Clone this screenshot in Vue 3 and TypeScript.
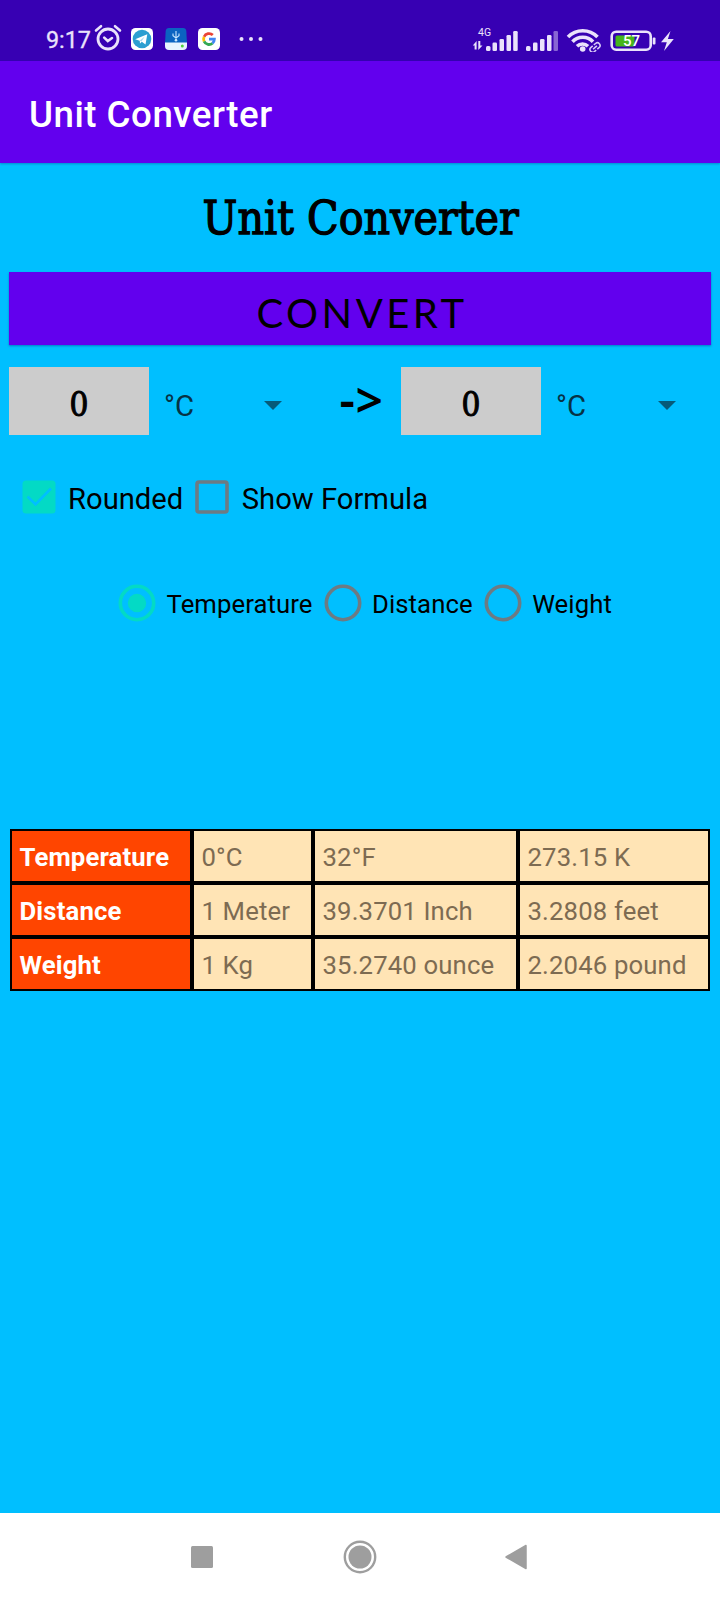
<script setup lang="ts">
import { ref } from 'vue'

interface TableRow {
  name: string
  values: string[]
}

const fromValue = ref('0')
const toValue = ref('0')
const unit = '°C'
const rounded = ref(true)
const showFormula = ref(false)
const kinds = ['Temperature', 'Distance', 'Weight']
const selectedKind = ref('Temperature')

const rows: TableRow[] = [
  { name: 'Temperature', values: ['0°C', '32°F', '273.15 K'] },
  { name: 'Distance', values: ['1 Meter', '39.3701 Inch', '3.2808 feet'] },
  { name: 'Weight', values: ['1 Kg', '35.2740 ounce', '2.2046 pound'] },
]
</script>

<template>
  <div class="screen">
    <header class="status">
      <span class="clock">9:17</span>
      <svg class="alarm" width="28" height="28" viewBox="0 0 28 28" fill="none" stroke="#eae2fb" stroke-linecap="round">
        <circle cx="14" cy="15" r="10" stroke-width="2.8" />
        <path d="M2 6.5 7 2.2M26 6.5 21 2.2" stroke-width="2.6" />
        <path d="m10.2 13.6 3.6 3.4 4.2-3" stroke-width="2.6" />
      </svg>
      <svg class="telegram" width="22" height="22" viewBox="0 0 22 22">
        <rect width="22" height="22" rx="4.5" fill="#fff" />
        <circle cx="11" cy="11" r="9.3" fill="#2c9fd1" />
        <path d="M4.2 11.2 16.3 6.2 14.5 16.4 10.8 13.8 9 15.5 8.7 12.8Z" fill="#fff" />
        <path d="m8.7 12.8 5-4.2-3.2 4.8" fill="#a9d8ee" />
      </svg>
      <svg class="usb" width="22" height="22" viewBox="0 0 22 22">
        <path d="M4 0h14q3 0 3.3 3L22 15H0L.7 3Q1 0 4 0Z" fill="#0b63c1" />
        <path d="M0 14.5h22V18q0 4-4 4H4q-4 0-4-4Z" fill="#e8f4ff" />
        <path d="M11 3v10M8 5.5v2.3L11 10l3-2.2V5.5" fill="none" stroke="#c9e6ff" stroke-width="1.1" />
        <circle cx="11" cy="12.3" r="1.3" fill="#c9e6ff" />
        <circle cx="17.3" cy="18" r="1.5" fill="#50d33c" />
      </svg>
      <svg class="google" width="22" height="22" viewBox="0 0 22 22">
        <rect width="22" height="22" rx="4.5" fill="#fff" />
        <g fill="none" stroke-width="2.8">
          <path d="M14.8 7.1A5.4 5.4 0 0 0 6.1 8.8" stroke="#ea4335" />
          <path d="M6.1 8.8a5.4 5.4 0 0 0 0 4.6" stroke="#fbbc05" />
          <path d="M6.1 13.4a5.4 5.4 0 0 0 8.4 1.8" stroke="#34a853" />
          <path d="M14.5 15.2a5.4 5.4 0 0 0 1.9-4.1H11" stroke="#4285f4" />
        </g>
      </svg>
      <svg class="more" width="24" height="6" viewBox="0 0 24 6" fill="#eae2fb">
        <circle cx="2.5" cy="3" r="2" /><circle cx="12" cy="3" r="2" /><circle cx="21.5" cy="3" r="2" />
      </svg>
      <svg class="signals" width="220" height="30" viewBox="0 0 220 30" fill="#eae2fb">
        <text x="8" y="14" class="network">4G</text>
        <path d="M2.8 23.5 6.6 19v8.5H4.6v-4ZM8.3 19h2v4.500h2.200L8.3 28Z" />
        <rect x="16" y="24" width="4.5" height="5" rx="1.5" />
        <rect x="22.5" y="20.5" width="4.5" height="8.5" rx="1.3" />
        <rect x="29.5" y="17" width="4.5" height="12" rx="1.3" />
        <rect x="36.5" y="13" width="4.5" height="16" rx="1.3" />
        <rect x="43.2" y="9" width="4.5" height="20" rx="1.3" />
        <rect x="56" y="24" width="4.5" height="5" rx="1.5" />
        <rect x="63" y="20.5" width="4.5" height="8.5" rx="1.3" />
        <rect x="70" y="17" width="4.5" height="12" rx="1.3" />
        <rect x="77" y="13" width="4.5" height="16" rx="1.3" />
        <rect x="83.5" y="9" width="4.5" height="20" rx="1.3" opacity=".45" />
        <g fill="none" stroke="#eae2fb" stroke-width="3.6">
          <path d="M98 15a20.5 20.5 0 0 1 29.5 0" />
          <path d="M102.5 19.7a14 14 0 0 1 20.5 0" />
          <path d="M107 24.2a8 8 0 0 1 11 0" />
        </g>
        <circle cx="112.7" cy="27" r="2.8" />
        <g transform="rotate(-40 125 25.5)" fill="none" stroke="#3700b3" stroke-width="4">
          <rect x="119.5" y="22.8" width="11" height="5.4" rx="2.7" />
        </g>
        <g transform="rotate(-40 125 25.5)" fill="none" stroke="#d6c8f6" stroke-width="1.6">
          <path d="M124.3 22.8h-2.300a2.700 2.700 0 0 0 0 5.400h2.300M125.700 22.800h2.300a2.700 2.700 0 0 1 0 5.400h-2.300M122.500 25.500h5" />
        </g>
        <rect x="141.7" y="9.7" width="39" height="18" rx="4.5" fill="none" stroke="#eae2fb" stroke-width="2.6" />
        <rect x="145.5" y="13.5" width="19" height="11" rx="1.5" fill="#46b51c" />
        <rect x="182.7" y="15.5" width="2.8" height="7" rx="1" />
        <text x="153" y="24.2" class="charge">57</text>
        <path d="M200.5 9 191 20.3h5.8L194 29l9.8-12h-5.9Z" />
      </svg>
    </header>

    <div class="app-bar">Unit Converter</div>

    <main class="content">
      <h1 class="heading"><span>Unit Converter</span></h1>
      <button class="convert" type="button"><span class="convert-label">CONVERT</span></button>

      <section class="fields">
        <div class="value">{{ fromValue }}</div>
        <div class="unit">
          <span>{{ unit }}</span>
          <svg width="18" height="9" viewBox="0 0 18 9"><path d="M0 0h18L9 9Z" fill="#065b78" /></svg>
        </div>
        <div class="arrow"><span>-&gt;</span></div>
        <div class="value">{{ toValue }}</div>
        <div class="unit last">
          <span>{{ unit }}</span>
          <svg width="18" height="9" viewBox="0 0 18 9"><path d="M0 0h18L9 9Z" fill="#065b78" /></svg>
        </div>
      </section>

      <section class="checks">
        <label class="check" @click="rounded = !rounded">
          <svg width="34" height="34" viewBox="0 0 34 34">
            <rect v-if="rounded" x=".5" y=".5" width="33" height="33" rx="3.5" fill="#03dac5" />
            <rect v-else x="2" y="2" width="30" height="30" rx="2" fill="none" stroke="#6d7b83" stroke-width="3.6" />
            <path v-if="rounded" d="m5.5 16.5 8 8L29 8.5" fill="none" stroke="#00bfff" stroke-width="2.6" />
          </svg>
          <span>Rounded</span>
        </label>
        <label class="check" @click="showFormula = !showFormula">
          <svg width="34" height="34" viewBox="0 0 34 34">
            <rect v-if="showFormula" x=".5" y=".5" width="33" height="33" rx="3.5" fill="#03dac5" />
            <rect v-else x="2" y="2" width="30" height="30" rx="2" fill="none" stroke="#6d7b83" stroke-width="3.6" />
            <path v-if="showFormula" d="m5.5 16.5 8 8L29 8.5" fill="none" stroke="#00bfff" stroke-width="2.6" />
          </svg>
          <span>Show Formula</span>
        </label>
      </section>

      <section class="radios">
        <label v-for="kind in kinds" :key="kind" class="radio" @click="selectedKind = kind">
          <svg width="38" height="38" viewBox="0 0 38 38" :class="{ on: selectedKind === kind }">
            <circle class="ring" cx="19" cy="19" r="16.7" />
            <circle v-if="selectedKind === kind" class="dot" cx="19" cy="19" r="9.2" />
          </svg>
          <span>{{ kind }}</span>
        </label>
      </section>

      <section class="table">
        <template v-for="row in rows" :key="row.name">
          <div class="cell name">{{ row.name }}</div>
          <div v-for="value in row.values" :key="value" class="cell">{{ value }}</div>
        </template>
      </section>
    </main>

    <nav class="nav">
      <svg width="22" height="22" viewBox="0 0 22 22"><rect width="22" height="22" rx="1.5" fill="#9e9e9e" /></svg>
      <svg class="home" width="34" height="34" viewBox="0 0 34 34">
        <circle cx="17" cy="17" r="15.2" fill="none" stroke="#9e9e9e" stroke-width="2.4" />
        <circle cx="17" cy="17" r="11.5" fill="#9e9e9e" />
      </svg>
      <svg width="22" height="26" viewBox="0 0 22 26">
        <path d="M1 13 21 1.5v23Z" fill="#9e9e9e" stroke="#9e9e9e" stroke-width="1.5" stroke-linejoin="round" />
      </svg>
    </nav>
  </div>
</template>

<style>
body {
  margin: 0;
}
</style>

<style scoped>
.screen {
  width: 720px;
  height: 1600px;
  display: flex;
  flex-direction: column;
  overflow: hidden;
  background: #00bfff;
  color: #000;
  font-family: Roboto, "Liberation Sans", sans-serif;
}
.screen svg {
  flex: none;
  display: block;
}
.status {
  box-sizing: border-box;
  height: 61px;
  flex: none;
  display: flex;
  align-items: center;
  padding: 17px 0 0 46px;
  background: #3700b3;
  color: #eae2fb;
}
.clock {
  width: 48px;
  padding-top: 2px;
  font-size: 23.3px;
  line-height: 24px;
  -webkit-text-stroke: 0.3px #eae2fb;
}
.alarm {
  margin: 0 0 2px;
}
.telegram {
  margin-left: 9px;
}
.usb {
  margin-left: 12px;
}
.google {
  margin-left: 11px;
}
.more {
  margin-left: 19px;
}
.signals {
  margin: 0 0 5px 207px;
}
.network {
  font-size: 10.5px;
}
.charge {
  font-size: 15px;
  font-weight: 500;
  fill: #fff;
}
.app-bar {
  box-sizing: border-box;
  height: 102px;
  flex: none;
  display: flex;
  align-items: center;
  padding: 4px 0 0 29px;
  background: #6200ee;
  box-shadow: 0 1px 2px rgba(0, 60, 130, 0.4);
  color: #fff;
  font-size: 36.7px;
  font-weight: 500;
  letter-spacing: 0.5px;
}
.content {
  flex: 1;
  padding: 0 9px;
}
.heading {
  height: 109px;
  margin: 0;
  display: flex;
  align-items: center;
  justify-content: center;
  padding-left: 1px;
  white-space: nowrap;
  font-family: "DejaVu Serif", serif;
  font-size: 47px;
  font-weight: 400;
  -webkit-text-stroke: 1.4px #000;
}
.heading span {
  transform: scaleX(0.88);
}
.convert {
  width: 702px;
  height: 73px;
  display: flex;
  justify-content: center;
  padding: 19px 0 0;
  border: 0;
  background: #6200ee;
  box-shadow: 0 1px 2px rgba(0, 50, 140, 0.5);
  color: #000;
  font-family: Lato, sans-serif;
  font-size: 40px;
}
.convert-label {
  padding-left: 4px;
  line-height: 44px;
  letter-spacing: 3.5px;
}
.fields {
  height: 68px;
  margin-top: 22px;
  display: flex;
}
.value {
  width: 140px;
  display: flex;
  align-items: center;
  justify-content: center;
  padding-top: 7px;
  box-sizing: border-box;
  background: #ccc;
  font-family: "DejaVu Serif Condensed", "DejaVu Serif", serif;
  font-size: 33px;
  -webkit-text-stroke: 1px #000;
}
.unit {
  box-sizing: border-box;
  width: 162px;
  display: flex;
  align-items: center;
  justify-content: space-between;
  padding: 10px 29px 0 15px;
  color: #073244;
  font-size: 29.3px;
}
.unit svg {
  margin-bottom: 2px;
}
.last {
  padding-right: 27px;
}
.arrow {
  width: 90px;
  padding-left: 11px;
  box-sizing: border-box;
  font-family: "Noto Sans", sans-serif;
  font-size: 48px;
  font-weight: 600;
  line-height: 66px;
  letter-spacing: 0.5px;
  text-align: center;
  white-space: nowrap;
}
.checks {
  display: flex;
  gap: 12px;
  height: 34px;
  margin: 45px 0 0 12.5px;
}
.check {
  display: flex;
  align-items: center;
  gap: 12.5px;
  font-size: 29.2px;
}
.check span {
  padding-top: 3px;
}
.radios {
  display: flex;
  gap: 11px;
  height: 38px;
  margin: 70px 0 0 109px;
}
.radio {
  display: flex;
  align-items: center;
  gap: 10.5px;
  font-size: 25.7px;
  letter-spacing: 0.08px;
}
.radio span {
  padding-top: 2px;
}
.ring {
  fill: none;
  stroke: #6d7b83;
  stroke-width: 3.6;
}
.on .ring {
  stroke: #03dac5;
}
.dot {
  fill: #03dac5;
}
.table {
  display: grid;
  grid-template-columns: 182px 121px 205px 192px;
  grid-auto-rows: 54px;
  margin: 207px 0 0 1px;
  width: 700px;
}
.cell {
  box-sizing: border-box;
  display: flex;
  align-items: center;
  padding: 2px 0 0 7.5px;
  border: 2px solid #000;
  background: #ffe4b5;
  color: #7d6b52;
  font-size: 25.7px;
  letter-spacing: 0.15px;
  white-space: nowrap;
}
.name {
  background: #ff4500;
  color: #fff;
  font-weight: 700;
}
.nav {
  box-sizing: border-box;
  height: 87px;
  flex: none;
  display: flex;
  align-items: center;
  justify-content: space-between;
  padding: 0 193px 0 191px;
  background: #fff;
}
.home {
  margin-left: 2px;
}
</style>
